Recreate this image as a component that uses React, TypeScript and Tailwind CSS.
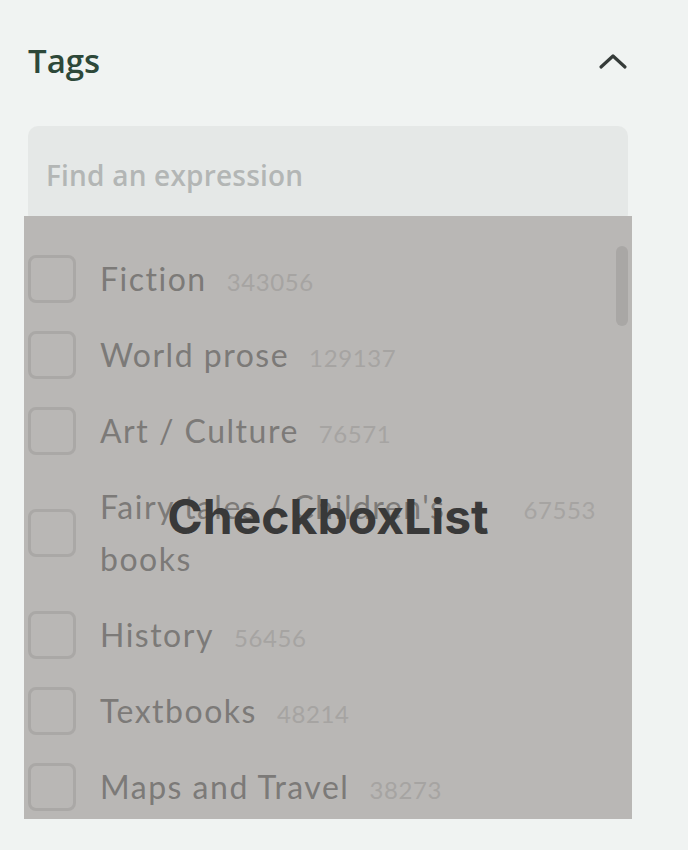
import React from 'react'

const tags = [
  { name: 'Fiction', count: 343056 },
  { name: 'World prose', count: 129137 },
  { name: 'Art / Culture', count: 76571 },
  { name: "Fairy tales / Children's books", count: 67553 },
  { name: 'History', count: 56456 },
  { name: 'Textbooks', count: 48214 },
  { name: 'Maps and Travel', count: 38273 },
]

const ChevronUp = () => (
  <svg width="30" height="18" viewBox="0 0 30 18" fill="none">
    <path d="M3 15 L15 4 L27 15" stroke="#353b39" strokeWidth="3.2" strokeLinecap="round" strokeLinejoin="round" />
  </svg>
)

const App: React.FC = () => {
  return (
    <div className="min-h-[850px] w-[688px] bg-[#f0f3f2] font-['Lato','Liberation_Sans',sans-serif]">
      <div className="ml-[28px] w-[600px] pt-[40px]">
        <div className="flex h-[42px] items-center justify-between">
          <span className="font-['Open_Sans',sans-serif] text-[33px] font-semibold text-[#2d4839]">Tags</span>
          <ChevronUp />
        </div>
        <div className="mt-[44px] flex h-[98px] items-center rounded-[10px] bg-[#e5e8e7] px-[18px]">
          <span className="font-['Open_Sans',sans-serif] text-[28px] font-semibold tracking-[0.2px] text-[#b3b6b5]">Find an expression</span>
        </div>
        <div className="relative -mx-[4px] -mt-[8px] h-[603px] bg-[#b9b7b5]">
          <div className="flex flex-col gap-[24px] pt-[37px] pl-[4px] pr-[36px]">
            {tags.map((t) => (
              <div key={t.name} className="flex items-center">
                <div className="h-[48px] w-[48px] shrink-0 rounded-[8px] border-[3px] border-[#aaa8a6]" />
                <div className="ml-[24px] flex flex-1 items-baseline gap-[20px]">
                  <span className="text-[32px] leading-[52px] tracking-[1.5px] text-[#7c7a78]">{t.name}</span>
                  <span className="text-[24px] tracking-[0.6px] text-[#a6a4a2]">{t.count}</span>
                </div>
              </div>
            ))}
          </div>
          <div className="absolute right-[4px] top-[30px] h-[80px] w-[12px] rounded-full bg-[#a9a7a5]" />
          <div className="absolute inset-0 flex items-center justify-center">
            <span className="-mt-[2px] font-['Inter',sans-serif] text-[48px] font-bold text-[#393939]">CheckboxList</span>
          </div>
        </div>
      </div>
    </div>
  )
}

export default App
